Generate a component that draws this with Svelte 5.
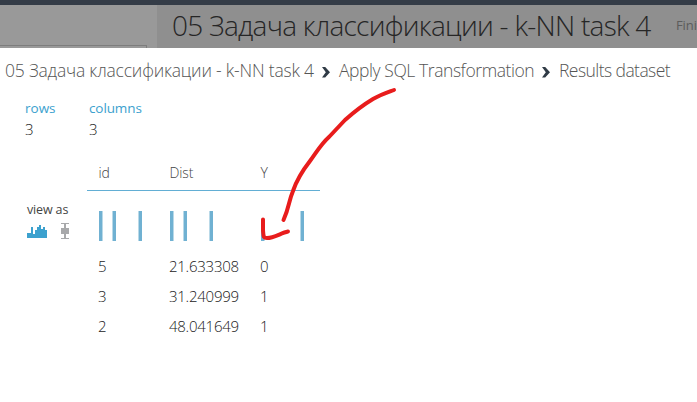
<script>
  const columns = [
    { name: 'id', width: 71, bars: [[0, 30], [13, 30], [39, 30]], values: ['5', '3', '2'] },
    { name: 'Dist', width: 91, bars: [[0, 30], [13, 30], [39, 30]], values: ['21.633308', '31.240999', '48.041649'] },
    { name: 'Y', width: 59, bars: [[0, 15], [39, 30]], values: ['0', '1', '1'] }
  ];
</script>

<div class="page">
  <div class="topbar"></div>
  <div class="backdrop">
    <div class="side"><div class="search"></div></div>
    <div class="heading">
      <span class="title">05 Задача классификации - k-NN task 4</span>
      <span class="status">Fini</span>
    </div>
  </div>

  <main>
    <nav>
      <span class="c1">05 Задача классификации - k-NN task 4</span>
      <svg class="chev" width="8" height="11" viewBox="0 0 8 11"><path d="M0 0H3.2L8 5.3L3.2 10.5H0L3.8 5.3Z" /></svg>
      <span class="c2">Apply SQL Transformation</span>
      <svg class="chev" width="8" height="11" viewBox="0 0 8 11"><path d="M0 0H3.2L8 5.3L3.2 10.5H0L3.8 5.3Z" /></svg>
      <span class="c3">Results dataset</span>
    </nav>

    <div class="stats">
      <div class="stat"><b>rows</b><span>3</span></div>
      <div class="stat"><b class="wide">columns</b><span>3</span></div>
    </div>

    <div class="data">
      <aside>
        <div class="viewas">view as</div>
        <div class="icons">
          <svg class="bars" width="20" height="13" viewBox="0 0 20 13" shape-rendering="crispEdges"><path fill="#3ca1ce" d="M0 13V8H4V2H6V9H8V5H10V2H12V0H14V4H16V2H18V5H20V13Z" /></svg>
          <svg width="8" height="16" viewBox="0 0 8 16" shape-rendering="crispEdges"><path fill="#a8a9ab" d="M0 0H8V1H5V5H8V11H5V15H8V16H0V15H3V11H0V5H3V1H0Z" /></svg>
        </div>
      </aside>
      <div class="table">
        {#each columns as col}
          <div class="col" style:width="{col.width}px">
            <div class="head">{col.name}</div>
            <svg class="hist" width="59" height="30" viewBox="0 0 59 30" shape-rendering="crispEdges">
              {#each col.bars as [x, h], i}
                <rect {x} y={30 - h} width="4" height={h} fill="#b9d9e8" />
                <rect x={i === 0 ? x : x + 1} y={30 - h} width="3" height={h} fill="#70b1d2" />
              {/each}
            </svg>
            {#each col.values as v}
              <div class="cell">{v}</div>
            {/each}
          </div>
        {/each}
      </div>
    </div>
  </main>

  <svg class="arrow" width="697" height="402" viewBox="0 0 697 402">
    <path d="M394 90C386 93 380 95 373 99C363 105 354 112 345 120L329 137C321 144 316 153 310 161C303 170 296 182 293 191C288 203 290 205 283.500 220" />
    <path d="M263 219.500V230C263.500 236 263 238 267 238C274 238 281 233 288 231.500" />
  </svg>
</div>

<style>
  .page {
    position: relative;
    width: 697px;
    height: 402px;
    overflow: hidden;
    background: #fff;
    font-family: "Open Sans", "Noto Sans", sans-serif;
    font-weight: 300;
    white-space: nowrap;
  }
  .topbar { height: 5px; background: #343c47; }
  .backdrop { display: flex; height: 43px; background: #999; }
  .side { flex: none; width: 157px; padding-top: 40px; box-sizing: border-box; }
  .search {
    width: 147px;
    height: 3px;
    box-sizing: border-box;
    border: solid #7d7d7d;
    border-width: 1px 1px 0 0;
  }
  .heading {
    flex: 1;
    min-width: 0;
    display: flex;
    padding-left: 15px;
    background: #8f8f8f;
    color: #262626;
  }
  .title { width: 504px; flex: none; font-size: 28px; line-height: 40px; letter-spacing: -0.74px; }
  .status { font-size: 13px; line-height: 40px; color: #5c5c5c; font-weight: 400; letter-spacing: -0.1px; }
  nav { display: flex; height: 46px; padding-left: 5px; line-height: 45px; font-size: 17.500px; color: #555; }
  .c1 { width: 317px; letter-spacing: -0.2px; }
  .c2 { width: 203px; letter-spacing: -0.43px; }
  .c3 { letter-spacing: -0.56px; }
  .chev { flex: none; margin: 19px 9px 0 0; fill: #303b46; }
  .stats { display: flex; height: 57px; padding: 4px 0 0 25px; }
  .stat { width: 64px; }
  .stat b { display: block; font-size: 13.500px; font-weight: 400; line-height: 20px; color: #3ca1ce; }
  .stat b.wide { letter-spacing: -0.1px; }
  .stat span { display: block; font-size: 15px; line-height: 23px; color: #222; }
  .data { display: flex; }
  aside { width: 60px; padding: 46px 0 0 27px; }
  .viewas { font-size: 12.500px; font-weight: 400; line-height: 18px; color: #444; letter-spacing: -0.15px; }
  .icons { display: flex; gap: 14px; align-items: flex-start; margin-top: 4px; }
  .bars { margin-top: 2px; }
  .table {
    display: flex;
    align-self: flex-start;
    width: 233px;
    background: linear-gradient(#62aed4, #62aed4) 0 35px / 233px 1px no-repeat;
  }
  .col { flex: none; }
  .col:first-child { margin-left: 12px; }
  .head { height: 35px; line-height: 35px; margin-left: -0.5px; font-size: 14px; color: #444; letter-spacing: -0.1px; }
  .hist { display: block; margin: 21px 0 10px; }
  .cell { height: 30px; line-height: 30px; margin-left: -1px; font-size: 15px; letter-spacing: -0.25px; color: #222; }
  .arrow { position: absolute; left: 0; top: 0; fill: none; stroke: #e81c1c; stroke-width: 4; stroke-linecap: round; stroke-linejoin: round; }
</style>
